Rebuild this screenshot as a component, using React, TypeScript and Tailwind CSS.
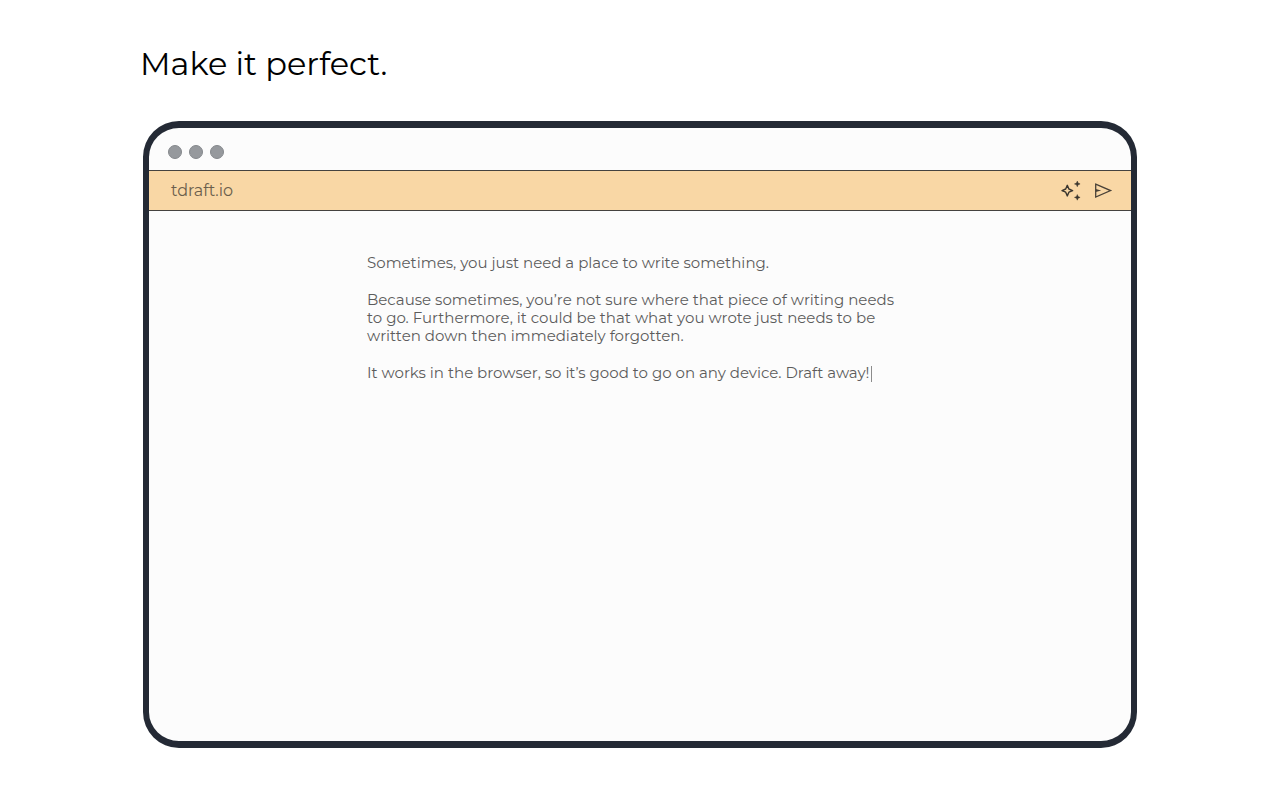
import React from "react";

const paragraphs = [
  "Sometimes, you just need a place to write something.",
  "Because sometimes, you’re not sure where that piece of writing needs to go. Furthermore, it could be that what you wrote just needs to be written down then immediately forgotten.",
];

function SparkleIcon() {
  return (
    <svg width="20" height="20" viewBox="0 0 20 20" fill="none" aria-hidden="true">
      <path
        d="M6.3 4.3 L7.9 8 L11.6 9.6 L7.9 11.2 L6.3 14.9 L4.7 11.2 L1 9.6 L4.7 8 Z"
        stroke="#3b362f"
        strokeWidth="1.4"
        strokeLinejoin="round"
      />
      <path d="M16.3 .1 L17.1 2.1 L19.1 2.9 L17.1 3.7 L16.3 5.7 L15.5 3.7 L13.5 2.9 L15.5 2.1 Z" fill="#3b362f" stroke="#3b362f" strokeWidth=".5" />
      <path d="M16.3 13.6 L17.1 15.6 L19.1 16.4 L17.1 17.2 L16.3 19.2 L15.5 17.2 L13.5 16.4 L15.5 15.6 Z" fill="#3b362f" stroke="#3b362f" strokeWidth=".5" />
    </svg>
  );
}

function SendIcon() {
  return (
    <svg width="20" height="20" viewBox="0 0 20 20" fill="none" aria-hidden="true">
      <path
        d="M2.7 3.2 L17.6 9.6 L2.7 16 Z"
        stroke="#4a4238"
        strokeWidth="1.3"
      />
      <path d="M2.7 8.1 L8.2 9.6 L2.7 11.1 Z" fill="#4a4238" />
    </svg>
  );
}

export default function App() {
  return (
    <main className="min-h-screen bg-white font-['Montserrat','Inter',sans-serif]">
      <div className="mx-auto max-w-[1000px] pt-11 pb-12">
        <h1 className="text-[32px] leading-10 font-normal text-black">Make it perfect.</h1>

        {/* browser window */}
        <section className="mx-[3px] mt-[37px] flex flex-col overflow-hidden rounded-[36px] border-x-[6px] border-y-[7px] border-[#242a35] bg-[#fcfcfc]">
          <div className="flex h-[42px] items-center gap-[7px] px-[19px] pt-1.5">
            <span className="size-3.5 rounded-full border border-[#85888c] bg-[#96999d]" />
            <span className="size-3.5 rounded-full border border-[#85888c] bg-[#96999d]" />
            <span className="size-3.5 rounded-full border border-[#85888c] bg-[#96999d]" />
          </div>

          <header className="flex h-[41px] items-center justify-between border-y border-[#45423f] bg-[#f9d7a5] pr-[18px] pl-[22px]">
            <a href="#" className="text-base text-[#6b5e4c]">tdraft.io</a>
            <div className="flex items-center gap-3">
              <button type="button" aria-label="Clean up">
                <SparkleIcon />
              </button>
              <button type="button" aria-label="Send">
                <SendIcon />
              </button>
            </div>
          </header>

          {/* draft */}
          <article className="mx-auto flex min-h-[530px] w-full max-w-[546px] flex-col gap-[19px] pt-[43px] text-[15px] leading-[18px] text-[#5c5c5c]">
            {paragraphs.map((text) => (
              <p key={text}>{text}</p>
            ))}
            <p>
              It works in the browser, so it’s good to go on any device. Draft away!
              <span className="ml-0.5 inline-block h-4 w-px bg-[#8c8c8c] align-text-bottom" />
            </p>
          </article>
        </section>
      </div>
    </main>
  );
}
